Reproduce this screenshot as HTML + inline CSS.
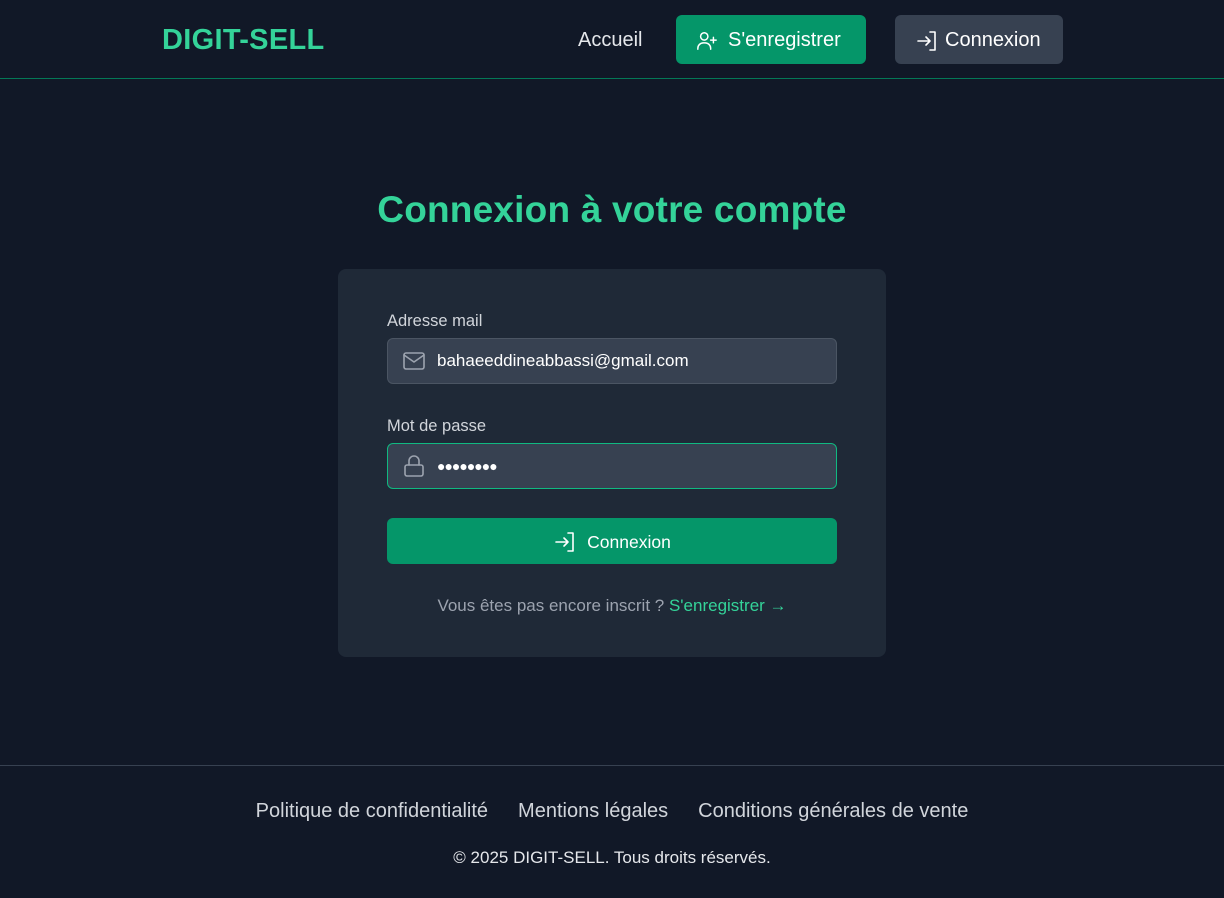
<!DOCTYPE html>
<html><head><meta charset="utf-8"><style>
*{box-sizing:border-box;margin:0;padding:0}
body{width:1224px;height:898px;background:#111827;font-family:"Liberation Sans",sans-serif;color:#fff;position:relative;overflow:hidden}
.hdr{position:absolute;top:0;left:0;width:1224px;height:79px;border-bottom:1px solid #047857}
.logo{position:absolute;left:162px;top:24px;font-size:29px;font-weight:bold;color:#34d399;letter-spacing:0.3px}
.nav a{position:absolute;top:15px;height:49px;display:flex;align-items:center;font-size:20px;color:#e5e7eb;border-radius:6px;text-decoration:none;padding-top:2px}
.ic{fill:none;stroke:#fff;stroke-width:1.6;stroke-linecap:round;stroke-linejoin:round}
h1{position:absolute;top:189px;left:0;width:1224px;text-align:center;font-size:37px;color:#34d399;font-weight:bold;letter-spacing:0.2px}
.card{position:absolute;left:338px;top:269px;width:548px;height:388px;background:#1f2937;border-radius:8px}
.lbl{position:absolute;left:49px;font-size:16.5px;color:#d1d5db}
.inp{position:absolute;left:49px;width:450px;height:46px;background:#374151;border:1px solid #4b5563;border-radius:6px;font-size:17px;display:flex;align-items:center;padding-left:49px}
.inp svg{position:absolute;left:14px;top:10px}
.btn{position:absolute;left:49px;top:249px;width:450px;height:46px;background:#059669;border-radius:6px;display:flex;align-items:center;justify-content:center;font-size:17.5px;gap:10px;padding-top:2px}
.foot{position:absolute;top:765px;left:0;width:1224px;border-top:1px solid #374151}
.fl{position:absolute;top:34px;width:1224px;display:flex;justify-content:center;gap:30px;font-size:20px;color:#d1d5db}
</style></head><body>
<div class="hdr">
<div class="logo">DIGIT-SELL</div>
<div class="nav">
<a style="left:578px">Accueil</a>
<a style="left:676px;width:190px;background:#059669;color:#fff;padding-left:20px;gap:10px">
<svg width="22" height="22" viewBox="0 0 24 24" class="ic"><circle cx="9" cy="7" r="4"/><path d="M2 21v-1a6 6 0 0 1 6-6h2a6 6 0 0 1 6 6v1M19 8v6M16 11h6"/></svg>S'enregistrer</a>
<a style="left:895px;width:168px;background:#374151;color:#fff;padding-left:20px;gap:6px">
<svg width="24" height="24" viewBox="0 0 24 24" class="ic"><path d="M3 12h12M11 8l4 4-4 4M15 3h5v18h-5"/></svg>Connexion</a>
</div></div>
<h1>Connexion à votre compte</h1>
<div class="card">
<div class="lbl" style="top:43px">Adresse mail</div>
<div class="inp" style="top:69px"><svg width="24" height="24" viewBox="0 0 24 24" class="ic" style="stroke:#9ca3af"><rect x="2" y="4" width="20" height="16" rx="2"/><path d="M2 6l10 7 10-7"/></svg>bahaeeddineabbassi@gmail.com</div>
<div class="lbl" style="top:148px">Mot de passe</div>
<div class="inp" style="top:174px;border-color:#10b981;letter-spacing:-1px;font-size:14px"><svg width="24" height="24" viewBox="0 0 24 24" class="ic" style="stroke:#9ca3af"><rect x="3" y="11" width="18" height="11" rx="2"/><path d="M7 11V7a5 5 0 0 1 10 0v4"/></svg>●●●●●●●●</div>
<div class="btn"><svg width="24" height="24" viewBox="0 0 24 24" class="ic"><path d="M3 12h12M11 8l4 4-4 4M15 3h5v18h-5"/></svg>Connexion</div>
<div style="position:absolute;top:327px;width:100%;text-align:center;font-size:17px;color:#9ca3af">Vous êtes pas encore inscrit ? <span style="color:#34d399">S'enregistrer →</span></div>
</div>
<div class="foot">
<div class="fl"><span>Politique de confidentialité</span><span>Mentions légales</span><span>Conditions générales de vente</span></div>
<div style="position:absolute;top:82px;width:1224px;text-align:center;font-size:17px;color:#e5e7eb">© 2025 DIGIT-SELL. Tous droits réservés.</div>
</div>
</body></html>
